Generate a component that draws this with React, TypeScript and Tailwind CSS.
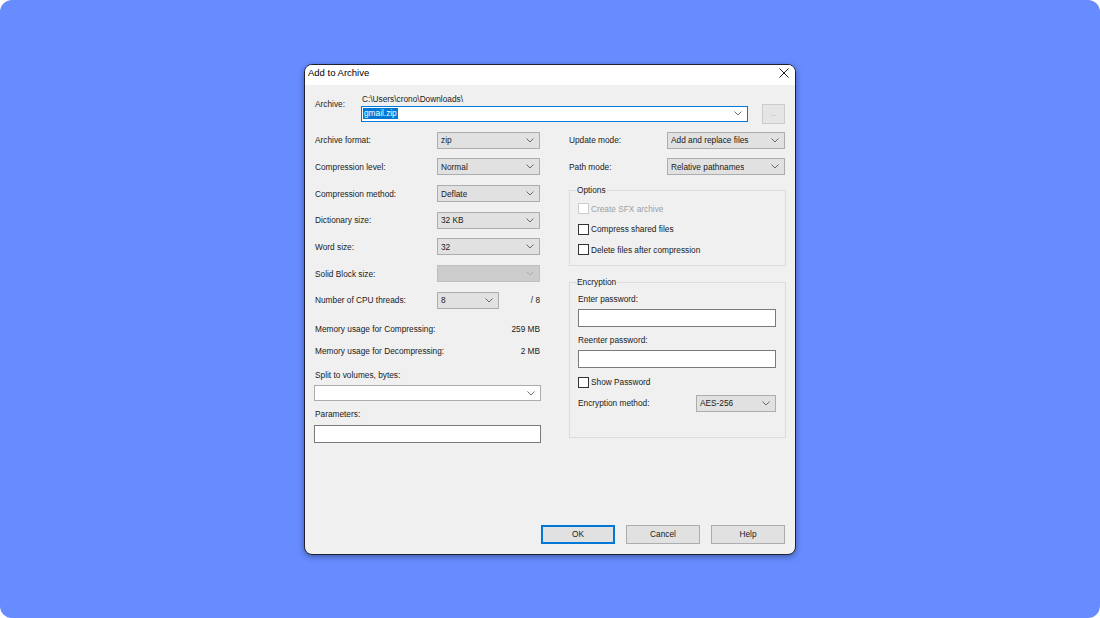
import React from "react";

function Chevron({ color = "#5a5a5a" }: { color?: string }) {
  return (
    <svg width="8" height="5" viewBox="0 0 8 5" className="shrink-0">
      <polyline points="0.5,0.5 4,4 7.5,0.5" fill="none" stroke={color} strokeWidth="0.9" />
    </svg>
  );
}

function Select({ value, className = "", disabled = false }: { value?: string; className?: string; disabled?: boolean }) {
  return (
    <div
      className={`h-[17px] flex items-center justify-between pl-[3px] pr-[5px] border ${
        disabled ? "bg-[#cccccc] border-[#bfbfbf]" : "bg-[#e1e1e1] border-[#adadad]"
      } ${className}`}
    >
      <span className="truncate">{value}</span>
      <Chevron color={disabled ? "#a8a8a8" : "#5a5a5a"} />
    </div>
  );
}

function Checkbox({ label, disabled = false }: { label: string; disabled?: boolean }) {
  return (
    <div className="flex items-center gap-[2px]">
      <div className={`w-[11px] h-[11px] bg-white border ${disabled ? "border-[#cccccc]" : "border-[#333333]"}`} />
      <span className={disabled ? "text-[#a0a0a0]" : ""}>{label}</span>
    </div>
  );
}

function Row({ label, children }: { label: string; children: React.ReactNode }) {
  return (
    <div className="h-[26.67px] flex items-center">
      <span className="w-[123px] pl-[1px]">{label}</span>
      {children}
    </div>
  );
}

export default function App() {
  return (
    <div className="w-[1100px] h-[618px] bg-white font-['Liberation_Sans',Arial,sans-serif] text-[8.3px] leading-[12px] text-[#1a1a1a]">
      <div className="w-full h-full rounded-[12px] bg-[#668cff] flex items-center justify-center">
        <div className="w-[492px] h-[491px] rounded-[8px] border border-[#1e2230] bg-[#f0f0f0] overflow-hidden flex flex-col shadow-[0_2px_6px_rgba(0,0,0,0.35)]">
          {/* title bar */}
          <div className="h-[20px] bg-white flex items-center justify-between pl-[3px] pr-[6px] pb-[4px] shrink-0">
            <span className="text-[9.5px] text-black">Add to Archive</span>
            <svg width="10" height="10" viewBox="0 0 10 10">
              <path d="M0.5 0.5 L9.5 9.5 M9.5 0.5 L0.5 9.5" stroke="#222" strokeWidth="1" />
            </svg>
          </div>

          <div className="flex-1 flex flex-col pl-[9px] pr-[9px]">
            {/* archive row */}
            <div className="flex items-start mt-[8px]">
              <span className="w-[47px] pl-[1px] mt-[5px]">Archive:</span>
              <div className="flex flex-col">
                <span className="pl-[1px] h-[12px] leading-[12px]">C:\Users\crono\Downloads\</span>
                <div className="mt-[1px] w-[387px] h-[16px] bg-white border border-[#0078d7] flex items-center justify-between pl-[1px] pr-[5px]">
                  <span className="bg-[#0078d7] text-white px-[1px] leading-[11px]">gmail.zip</span>
                  <Chevron />
                </div>
              </div>
              <div className="ml-[14px] mt-[11px] w-[23px] h-[20px] border border-[#cccccc] bg-[#e5e5e5] flex items-center justify-center text-[#a0a0a0] text-[7px]">
                ...
              </div>
            </div>

            {/* two columns */}
            <div className="flex mt-[3.5px]">
              {/* left */}
              <div className="w-[227px] flex flex-col">
                <Row label="Archive format:">
                  <Select value="zip" className="w-[103px]" />
                </Row>
                <Row label="Compression level:">
                  <Select value="Normal" className="w-[103px]" />
                </Row>
                <Row label="Compression method:">
                  <Select value="Deflate" className="w-[103px]" />
                </Row>
                <Row label="Dictionary size:">
                  <Select value="32 KB" className="w-[103px]" />
                </Row>
                <Row label="Word size:">
                  <Select value="32" className="w-[103px]" />
                </Row>
                <Row label="Solid Block size:">
                  <Select disabled className="w-[103px]" />
                </Row>
                <Row label="Number of CPU threads:">
                  <Select value="8" className="w-[62px]" />
                  <span className="ml-auto pr-[1px]">/ 8</span>
                </Row>

                <div className="mt-[4.7px] h-[22px] flex items-center justify-between pl-[1px] pr-[1px]">
                  <span>Memory usage for Compressing:</span>
                  <span>259 MB</span>
                </div>
                <div className="h-[22px] flex items-center justify-between pl-[1px] pr-[1px]">
                  <span>Memory usage for Decompressing:</span>
                  <span>2 MB</span>
                </div>

                <span className="mt-[7px] pl-[1px] h-[12px]">Split to volumes, bytes:</span>
                <div className="mt-[4px] h-[16px] bg-white border border-[#acacac] flex items-center justify-end pr-[5px]">
                  <Chevron />
                </div>

                <span className="mt-[7px] pl-[1px] h-[12px]">Parameters:</span>
                <div className="mt-[5px] h-[18px] bg-white border border-[#7a7a7a]" />
              </div>

              {/* right */}
              <div className="ml-[28px] w-[217px] flex flex-col">
                <div className="h-[26.67px] flex items-center">
                  <span className="w-[98px]">Update mode:</span>
                  <Select value="Add and replace files" className="w-[118px]" />
                </div>
                <div className="h-[26px] flex items-center">
                  <span className="w-[98px]">Path mode:</span>
                  <Select value="Relative pathnames" className="w-[118px]" />
                </div>

                <fieldset className="mt-[4.7px] border border-[#dcdcdc] pl-[8px] pr-[9px] pt-[2px] pb-[5px] flex flex-col">
                  <legend className="-ml-[2px] px-[1px] leading-[12px]">Options</legend>
                  <div className="h-[20.5px] flex items-center">
                    <Checkbox label="Create SFX archive" disabled />
                  </div>
                  <div className="h-[20.5px] flex items-center">
                    <Checkbox label="Compress shared files" />
                  </div>
                  <div className="h-[20.5px] flex items-center">
                    <Checkbox label="Delete files after compression" />
                  </div>
                </fieldset>

                <fieldset className="mt-[10.5px] border border-[#dcdcdc] pl-[8px] pr-[9px] pb-[26px] flex flex-col">
                  <legend className="-ml-[2px] px-[1px] leading-[12px]">Encryption</legend>
                  <span className="mt-[5px] h-[12px]">Enter password:</span>
                  <div className="mt-[4px] h-[18px] bg-white border border-[#7a7a7a]" />
                  <span className="mt-[7px] h-[12px]">Reenter password:</span>
                  <div className="mt-[4px] h-[18px] bg-white border border-[#7a7a7a]" />
                  <div className="mt-[8px] h-[12px] flex items-center">
                    <Checkbox label="Show Password" />
                  </div>
                  <div className="mt-[7px] h-[16px] flex items-center justify-between">
                    <span>Encryption method:</span>
                    <Select value="AES-256" className="w-[80px] h-[16px]" />
                  </div>
                </fieldset>
              </div>
            </div>

            <div className="flex-1" />

            {/* buttons */}
            <div className="flex justify-end gap-[11px] pr-[1px] pb-[10px]">
              <div className="w-[74px] h-[19px] border-2 border-[#0078d7] bg-[#e1e1e1] flex items-center justify-center">
                OK
              </div>
              <div className="w-[74px] h-[19px] border border-[#adadad] bg-[#e1e1e1] flex items-center justify-center">
                Cancel
              </div>
              <div className="w-[74px] h-[19px] border border-[#adadad] bg-[#e1e1e1] flex items-center justify-center">
                Help
              </div>
            </div>
          </div>
        </div>
      </div>
    </div>
  );
}
